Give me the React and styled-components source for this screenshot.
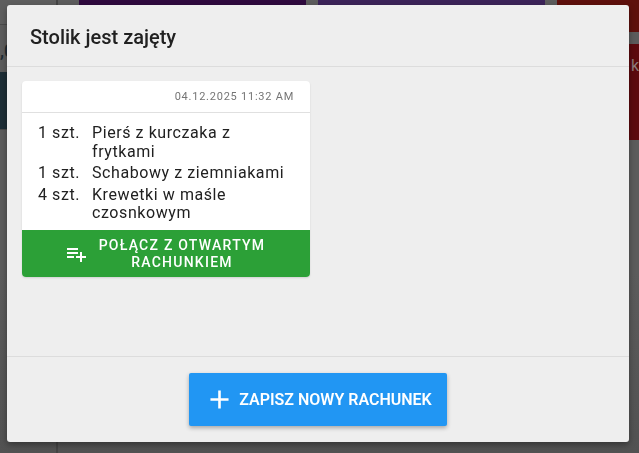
import React from "react";
import styled, { createGlobalStyle } from "styled-components";

const Global = createGlobalStyle`
  html, body { margin: 0; padding: 0; height: 100%; overflow: hidden; background: #525252; }
  * { box-sizing: border-box; }
  body { font-family: Roboto, "Liberation Sans", sans-serif; }
`;

const Page = styled.div`
  display: grid;
  grid-template-columns: 58px 1fr;
  width: 639px;
  height: 453px;
  overflow: hidden;
  background: linear-gradient(#5c5c5c, #5c5c5c 60%, #525252);
`;

const Side = styled.aside`
  display: flex;
  flex-direction: column;
  border-right: 2px solid #444;
`;

const SideTop = styled.div`
  height: 25px;
  background: #5e5e5e;
  border-bottom: 1px solid #4a4a4a;
`;

const SideGap = styled.div`
  height: 47px;
  padding-top: 16px;
  font-size: 18px;
  font-weight: 500;
  color: #1c2a30;
  line-height: 20px;
`;

const SideBlock = styled.div`
  height: 58px;
  background: #1d2e36;
  border-bottom: 1px solid #4a4a4a;
`;

const Tiles = styled.main`
  display: grid;
  grid-template-columns: 227px 227px 1fr;
  grid-auto-rows: 32px 96px;
  gap: 12px;
  padding-left: 21px;
  align-content: start;
`;

const Tile = styled.div`
  background: ${(p) => p.$color};
  color: #8d7a7a;
  font-size: 16px;
  line-height: 22px;
  padding: 11px 0 0 74px;
`;

const Overlay = styled.div`
  position: fixed;
  inset: 0;
  padding: 5px 10px 11px 7px;
  display: flex;
`;

const Dialog = styled.section`
  flex: 1;
  display: flex;
  flex-direction: column;
  background: #eeeeee;
  border-radius: 3px;
  box-shadow: 0 3px 6px rgba(0, 0, 0, 0.35);
`;

const Header = styled.header`
  height: 62px;
  flex: none;
  padding: 19px 23px 0;
  border-bottom: 1px solid #dcdcdc;
`;

const Title = styled.h2`
  margin: 0;
  font-size: 20px;
  line-height: 27px;
  font-weight: 500;
  color: #212121;
`;

const Content = styled.div`
  flex: 1;
  padding: 14px 15px;
  border-bottom: 1px solid #dcdcdc;
`;

const Card = styled.article`
  width: 288px;
  background: #fff;
  border-radius: 4px;
  overflow: hidden;
  box-shadow: 0 1px 2px rgba(0, 0, 0, 0.12);
`;

const CardHead = styled.div`
  height: 32px;
  padding: 0 16px;
  display: flex;
  align-items: center;
  justify-content: flex-end;
  border-bottom: 1px solid #e0e0e0;
  font-size: 11px;
  letter-spacing: 0.76px;
  color: #757575;
`;

const Items = styled.ul`
  list-style: none;
  margin: 0;
  padding: 11px 12px 7.5px 16px;
  display: flex;
  flex-direction: column;
  gap: 3px;
`;

const Item = styled.li`
  display: flex;
  font-size: 16px;
  line-height: 18.5px;
  letter-spacing: 0.58px;
  color: #212121;
`;

const Qty = styled.span`
  flex: none;
  width: 54px;
`;

const Merge = styled.button`
  display: flex;
  width: 100%;
  height: 47px;
  align-items: center;
  gap: 4px;
  border: 0;
  padding: 0 0 0 42px;
  background: #2ca037;
  color: #fff;
  font: 500 14px/17px Roboto, sans-serif;
  letter-spacing: 1.25px;
  text-transform: uppercase;
`;

const MergeLabel = styled.span`
  width: 180px;
  text-align: center;
`;

const Footer = styled.footer`
  height: 85px;
  flex: none;
  display: flex;
  justify-content: center;
  padding-top: 16px;
`;

const Save = styled.button`
  width: 258px;
  height: 53px;
  display: flex;
  align-items: center;
  justify-content: center;
  gap: 4px;
  border: 0;
  border-radius: 2px;
  background: #2196f3;
  color: #fff;
  font: 600 16px/18px Roboto, sans-serif;
  text-transform: uppercase;
  white-space: nowrap;
  box-shadow: 0 2px 4px rgba(0, 0, 0, 0.3);
`;

const PlaylistAdd = () => (
  <svg width="24" height="24" viewBox="0 0 24 24" fill="currentColor" style={{ flex: "none" }}>
    <path d="M14 10H3v2h11v-2zm0-4H3v2h11V6zm4 8v-4h-2v4h-4v2h4v4h2v-4h4v-2h-4zM3 16h7v-2H3v2z" />
  </svg>
);

const Plus = () => (
  <svg width="31" height="31" viewBox="0 0 24 24" fill="currentColor" style={{ flex: "none" }}>
    <path d="M19 13h-6v6h-2v-6H5v-2h6V5h2v6h6v2z" />
  </svg>
);

const items = [
  ["1 szt.", "Pierś z kurczaka z frytkami"],
  ["1 szt.", "Schabowy z ziemniakami"],
  ["4 szt.", "Krewetki w maśle czosnkowym"],
];

export default function App() {
  return (
    <>
      <Global />
      <Page>
        <Side>
          <SideTop />
          <SideGap>,0</SideGap>
          <SideBlock />
        </Side>
        <Tiles>
          <Tile $color="#2f0a3e" />
          <Tile $color="#3b2358" />
          <Tile $color="#5e100c" />
          <span />
          <span />
          <Tile $color="#5c0a0e">k</Tile>
        </Tiles>
      </Page>
      <Overlay>
        <Dialog>
          <Header>
            <Title>Stolik jest zajęty</Title>
          </Header>
          <Content>
            <Card>
              <CardHead>04.12.2025 11:32 AM</CardHead>
              <Items>
                {items.map(([q, n]) => (
                  <Item key={n}>
                    <Qty>{q}</Qty>
                    <span>{n}</span>
                  </Item>
                ))}
              </Items>
              <Merge>
                <PlaylistAdd />
                <MergeLabel>Połącz z otwartym rachunkiem</MergeLabel>
              </Merge>
            </Card>
          </Content>
          <Footer>
            <Save>
              <Plus />
              Zapisz nowy rachunek
            </Save>
          </Footer>
        </Dialog>
      </Overlay>
    </>
  );
}
